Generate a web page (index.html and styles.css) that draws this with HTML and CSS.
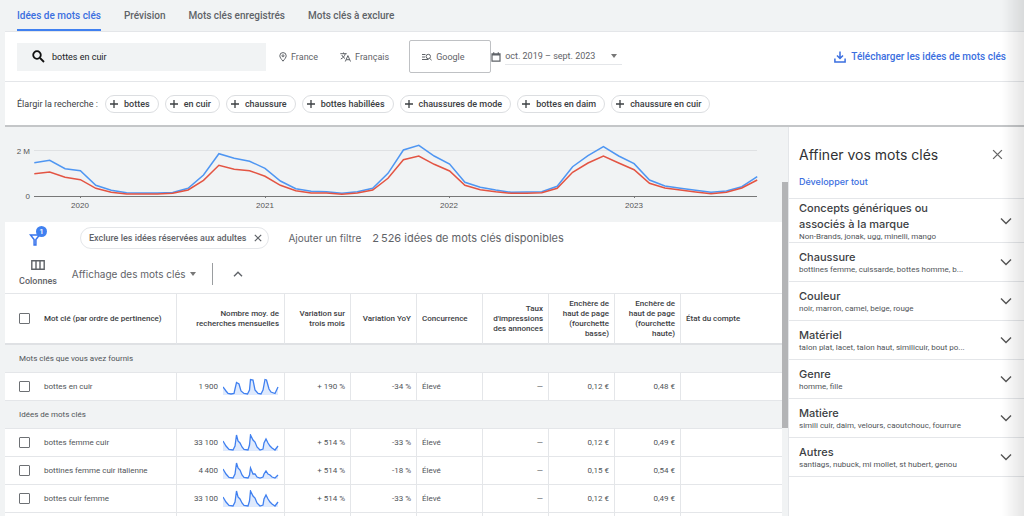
FILE: index.html
```html
<!DOCTYPE html>
<html lang="fr">
<head>
<meta charset="utf-8">
<meta name="viewport" content="width=device-width, initial-scale=1">
<title>Idées de mots clés</title>
<link rel="stylesheet" href="styles.css">
</head>
<body>
<svg class="defs" aria-hidden="true">
  <symbol id="plus" viewBox="0 0 10 10"><path d="M5 1v8M1 5h8"/></symbol>
  <symbol id="cross" viewBox="0 0 10 10"><path d="M1 1l8 8M9 1L1 9"/></symbol>
  <symbol id="down" viewBox="0 0 12 8"><path d="M1 1.500l5 5 5-5"/></symbol>
  <symbol id="spark-a" viewBox="0 0 56 18"><path class="area" d="M0 9L3 13 5 15.500 8 16 11 15.500 12 11 13.500 4.500 16 6 18 13 21 15.500 24.500 16 26.500 12 27.500 1.500 30 2 32 12 35 15.500 38 16 40 12 42 1.500 43.500 2 46 11 48 14 52 15.500 55 9V17H0z"/><path d="M0 9L3 13 5 15.500 8 16 11 15.500 12 11 13.500 4.500 16 6 18 13 21 15.500 24.500 16 26.500 12 27.500 1.500 30 2 32 12 35 15.500 38 16 40 12 42 1.500 43.500 2 46 11 48 14 52 15.500 55 9"/></symbol>
  <symbol id="spark-b" viewBox="0 0 56 18"><path class="area" d="M0 7L3 12 6 15.500 10 16 12 12 13.500 1 15 7 17 9 19 13 21 15.500 25 16 26.500 11 27.500 1 30 6 32 8 34 13 37 16 40 15 41 9 43 5 45 9 47 12 49 14 52 16 55 12V17H0z"/><path d="M0 7L3 12 6 15.500 10 16 12 12 13.500 1 15 7 17 9 19 13 21 15.500 25 16 26.500 11 27.500 1 30 6 32 8 34 13 37 16 40 15 41 9 43 5 45 9 47 12 49 14 52 16 55 12"/></symbol>
  <symbol id="spark-c" viewBox="0 0 56 18"><path class="area" d="M0 7L3 12 6 15.500 10 16 12 12 13.500 1 15 6 17 8 19 13 21 15.500 25 16 26.500 13 27.500 6 30 12 32 12 34 15 37 16 40 15 41 12 43 9 45 12 47 13 49 15 52 16 55 13V17H0z"/><path d="M0 7L3 12 6 15.500 10 16 12 12 13.500 1 15 6 17 8 19 13 21 15.500 25 16 26.500 13 27.500 6 30 12 32 12 34 15 37 16 40 15 41 12 43 9 45 12 47 13 49 15 52 16 55 13"/></symbol>
</svg>

<nav class="tabs">
  <a class="tab active" href="#idees">Idées de mots clés</a>
  <a class="tab" href="#prevision">Prévision</a>
  <a class="tab" href="#enregistres">Mots clés enregistrés</a>
  <a class="tab" href="#exclure">Mots clés à exclure</a>
</nav>

<header class="top">
  <div class="search-row">
    <label class="search">
      <svg class="icon-search" viewBox="0 0 13 13"><circle cx="5" cy="5" r="3.800"/><path d="M8 8l4 4"/></svg>
      <input type="text" value="bottes en cuir" aria-label="Mots clés">
    </label>
    <button class="setting place"><svg class="icon-pin" viewBox="0 0 8 10"><path d="M4 9.200C2.200 7 .8 5.300.8 3.800a3.200 3.200 0 0 1 6.400 0C7.200 5.300 5.800 7 4 9.200z"/><circle cx="4" cy="3.800" r="1"/></svg>France</button>
    <button class="setting language"><svg class="icon-lang" viewBox="0 0 11 10"><path d="M.3 1.700h6.400M3.500.5v1.200M5.300 1.700C4.800 4 3 5.900.8 7M1.800 3C2.400 4.600 3.700 5.800 5 6.500M5.300 9.500L7.900 3.600l2.600 5.900M6.200 7.700h3.400"/></svg>Français</button>
    <button class="setting network"><svg class="icon-net" viewBox="0 0 10 8"><path d="M0 1.500h3.500M0 4h3M0 6.500h6.500M7.600 5.400L9.600 7.200"/><circle cx="6.300" cy="3.500" r="2.200"/></svg>Google</button>
    <button class="setting dates"><svg class="icon-cal" viewBox="0 0 10 10"><path d="M1 1.800h8v7.400H1zM1 2.900h8M2.700.3v1.500M7.300.3v1.500"/></svg><span class="range">oct. 2019 – sept. 2023<i class="caret"></i></span></button>
    <button class="download"><svg class="icon-dl" viewBox="0 0 12 12"><path d="M6 .5v6.800M3 4.500l3 3 3-3M.9 7.500v3.400h10.200V7.500"/></svg>Télécharger les idées de mots clés</button>
  </div>
  <div class="broaden">
    <span class="broaden-label">Élargir la recherche :</span>
    <button class="chip"><svg class="icon-plus"><use href="#plus"/></svg>bottes</button>
    <button class="chip"><svg class="icon-plus"><use href="#plus"/></svg>en cuir</button>
    <button class="chip"><svg class="icon-plus"><use href="#plus"/></svg>chaussure</button>
    <button class="chip"><svg class="icon-plus"><use href="#plus"/></svg>bottes habillées</button>
    <button class="chip"><svg class="icon-plus"><use href="#plus"/></svg>chaussures de mode</button>
    <button class="chip"><svg class="icon-plus"><use href="#plus"/></svg>bottes en daim</button>
    <button class="chip"><svg class="icon-plus"><use href="#plus"/></svg>chaussure en cuir</button>
  </div>
</header>

<div class="workspace">
  <main class="content">
    <svg class="chart" viewBox="5 127 777 95" role="img" aria-label="Volume de recherche par mois">
      <path class="grid-line" d="M34 150.500H757"/>
      <path class="axis" d="M34 196.500H757M80.500 196v2M265.500 196v2M449.500 196v2M634.500 196v2"/>
      <polyline class="line blue" points="34.300,162.700 49.700,160.300 65.100,168.700 80.400,170.700 95.800,185.300 111.200,190.300 126.600,192.700 142,193 157.300,193 172.700,192.500 188.100,188.300 203.500,175 218.900,153.700 234.200,158.300 249.600,161.300 265,168.300 280.400,181 295.800,188.700 311.100,191.300 326.500,191.700 341.900,193.300 357.300,191.700 372.700,188.300 388,173.300 403.400,150 418.800,145.300 434.200,156 449.600,164 464.900,182.300 480.300,187.300 495.700,190 511.100,192.300 526.500,192 541.800,191.700 557.200,186.300 572.600,166.700 588,155.700 603.400,146.700 618.700,156 634.100,163.700 649.500,180 664.900,186 680.300,188.300 695.600,190.300 711,192.300 726.400,191 741.800,186.700 757.200,176.700"/>
      <polyline class="line red" points="34.300,173.700 49.700,172 65.100,177.300 80.400,179.700 95.800,188.300 111.200,192.300 126.600,194 142,194 157.300,194 172.700,193.300 188.100,190 203.500,180.300 218.900,165.300 234.200,169.300 249.600,170.700 265,176.300 280.400,185.300 295.800,190.700 311.100,193 326.500,193 341.900,194.300 357.300,193 372.700,190 388,178.300 403.400,159.700 418.800,156 434.200,164.300 449.600,171 464.900,185.300 480.300,189.700 495.700,191.700 511.100,193.300 526.500,193.200 541.800,192.700 557.200,188.300 572.600,172.300 588,163 603.400,156 618.700,163 634.100,169.700 649.500,183.300 664.900,188 680.300,190 695.600,192 711,193.700 726.400,192.300 741.800,188 757.200,180"/>
      <text x="30" y="154" text-anchor="end">2 M</text>
      <text x="30" y="199" text-anchor="end">0</text>
      <text x="80" y="208" text-anchor="middle">2020</text>
      <text x="265" y="208" text-anchor="middle">2021</text>
      <text x="449" y="208" text-anchor="middle">2022</text>
      <text x="634" y="208" text-anchor="middle">2023</text>
    </svg>

    <section class="panel">
      <div class="filters">
        <button class="filter-button" aria-label="Filtres"><svg class="icon-filter" viewBox="0 0 11 12"><path d="M1 1h9L6.400 5.500V11H4.600V5.500z"/></svg><span class="badge">1</span></button>
        <button class="filter-chip">Exclure les idées réservées aux adultes<svg class="icon-cross"><use href="#cross"/></svg></button>
        <button class="add-filter">Ajouter un filtre</button>
        <span class="count">2&#8201;526 idées de mots clés disponibles</span>
      </div>
      <div class="tools">
        <button class="columns"><svg class="icon-columns" viewBox="0 0 14 10"><path d="M.8.800h12.400v8.400H.8zM5 1v8M9 1v8"/></svg>Colonnes</button>
        <button class="view">Affichage des mots clés<i class="caret"></i></button>
        <button class="collapse" aria-label="Réduire"><svg class="icon-up" viewBox="0 0 10 6"><path d="M1 5.200l4-4 4 4"/></svg></button>
      </div>
      <table class="keywords">
        <colgroup><col class="c-name"><col class="c-volume"><col class="c-std"><col class="c-std"><col class="c-std"><col class="c-std"><col class="c-std"><col class="c-std"><col></colgroup>
        <thead>
          <tr>
            <th class="left"><label class="name"><input type="checkbox">Mot clé (par ordre de pertinence)</label></th>
            <th>Nombre moy. de recherches mensuelles</th>
            <th>Variation sur trois mois</th>
            <th>Variation YoY</th>
            <th class="left">Concurrence</th>
            <th>Taux d'impressions des annonces</th>
            <th>Enchère de haut de page (fourchette basse)</th>
            <th>Enchère de haut de page (fourchette haute)</th>
            <th class="left">État du compte</th>
          </tr>
        </thead>
        <tbody>
          <tr class="group"><td colspan="9">Mots clés que vous avez fournis</td></tr>
          <tr><td class="left"><label class="name"><input type="checkbox">bottes en cuir</label></td><td><span class="volume">1&#8201;900<svg class="spark"><use href="#spark-a"/></svg></span></td><td>+ 190 %</td><td>-34 %</td><td class="left">Élevé</td><td>—</td><td>0,12 €</td><td>0,48 €</td><td></td></tr>
          <tr class="group"><td colspan="9">Idées de mots clés</td></tr>
          <tr><td class="left"><label class="name"><input type="checkbox">bottes femme cuir</label></td><td><span class="volume">33&#8201;100<svg class="spark"><use href="#spark-b"/></svg></span></td><td>+ 514 %</td><td>-33 %</td><td class="left">Élevé</td><td>—</td><td>0,12 €</td><td>0,49 €</td><td></td></tr>
          <tr><td class="left"><label class="name"><input type="checkbox">bottines femme cuir italienne</label></td><td><span class="volume">4&#8201;400<svg class="spark"><use href="#spark-c"/></svg></span></td><td>+ 514 %</td><td>-18 %</td><td class="left">Élevé</td><td>—</td><td>0,15 €</td><td>0,54 €</td><td></td></tr>
          <tr><td class="left"><label class="name"><input type="checkbox">bottes cuir femme</label></td><td><span class="volume">33&#8201;100<svg class="spark"><use href="#spark-b"/></svg></span></td><td>+ 514 %</td><td>-33 %</td><td class="left">Élevé</td><td>—</td><td>0,12 €</td><td>0,49 €</td><td></td></tr>
          <tr><td></td><td></td><td></td><td></td><td></td><td></td><td></td><td></td><td></td></tr>
        </tbody>
      </table>
    </section>
  </main>
  <div class="scroll-track"><div class="scroll-thumb"></div></div>
  <aside class="refine">
    <div class="refine-head"><h2>Affiner vos mots clés</h2><button class="close" aria-label="Fermer"><svg class="icon-close"><use href="#cross"/></svg></button></div>
    <button class="expand">Développer tout</button>
    <button class="facet first"><span class="facet-text"><span class="facet-name">Concepts génériques ou associés à la marque</span><span class="facet-values">Non-Brands, jonak, ugg, minelli, mango</span></span><svg class="icon-down"><use href="#down"/></svg></button>
    <button class="facet"><span class="facet-text"><span class="facet-name">Chaussure</span><span class="facet-values">bottines femme, cuissarde, bottes homme, b...</span></span><svg class="icon-down"><use href="#down"/></svg></button>
    <button class="facet"><span class="facet-text"><span class="facet-name">Couleur</span><span class="facet-values">noir, marron, camel, beige, rouge</span></span><svg class="icon-down"><use href="#down"/></svg></button>
    <button class="facet"><span class="facet-text"><span class="facet-name">Matériel</span><span class="facet-values">talon plat, lacet, talon haut, similicuir, bout po...</span></span><svg class="icon-down"><use href="#down"/></svg></button>
    <button class="facet"><span class="facet-text"><span class="facet-name">Genre</span><span class="facet-values">homme, fille</span></span><svg class="icon-down"><use href="#down"/></svg></button>
    <button class="facet"><span class="facet-text"><span class="facet-name">Matière</span><span class="facet-values">simili cuir, daim, velours, caoutchouc, fourrure</span></span><svg class="icon-down"><use href="#down"/></svg></button>
    <button class="facet"><span class="facet-text"><span class="facet-name">Autres</span><span class="facet-values">santiags, nubuck, mi mollet, st hubert, genou</span></span><svg class="icon-down"><use href="#down"/></svg></button>
  </aside>
</div>
<div class="edge-shade"></div>
</body>
</html>
```

FILE: styles.css
```css
* { box-sizing: border-box; }

:root {
  --grey: #f1f3f4;
  --line: #e4e6e9;
  --text: #3c4043;
  --muted: #5f6368;
  --blue: #3b6fe0;
  --display: Inter, Roboto, sans-serif;
  --label: Roboto, "Liberation Sans", sans-serif;
}

body {
  margin: 0;
  height: 100vh;
  display: flex;
  flex-direction: column;
  overflow: hidden;
  padding-left: 5px;
  background: var(--grey);
  color: var(--text);
  font: 9px/12px var(--label);
}

button {
  border: 0;
  padding: 0;
  background: none;
  color: inherit;
  font: inherit;
  text-align: left;
  cursor: pointer;
}

svg { fill: none; stroke: currentColor; flex: none; }
.defs { position: absolute; width: 0; height: 0; }

.tabs {
  flex: none;
  display: flex;
  gap: 23px;
  height: 32px;
  padding-left: 12px;
  border-bottom: 1px solid var(--line);
}
.tab {
  display: flex;
  align-items: center;
  color: var(--muted);
  font: 500 10px/12px var(--label);
  text-decoration: none;
}
.tab.active {
  color: var(--blue);
  border-bottom: 2px solid #4080f0;
  padding-top: 2px;
}

.top {
  flex: none;
  background: #fff;
  border-bottom: 2px solid #c4c6c8;
}
.search-row {
  display: flex;
  align-items: center;
  height: 50px;
  padding: 0 18px 0 12px;
  border-bottom: 1px solid var(--line);
}
.search {
  display: flex;
  align-items: center;
  gap: 7px;
  width: 249px;
  height: 28px;
  padding-left: 15px;
  background: var(--grey);
}
.search input {
  flex: 1;
  min-width: 0;
  border: 0;
  outline: 0;
  padding: 0;
  background: none;
  color: #202124;
  font: 9px/12px var(--label);
}
.icon-search { width: 13px; height: 13px; stroke: #111; stroke-width: 1.8; }
.setting { display: flex; align-items: center; gap: 4px; color: var(--muted); }
.place { margin-left: 13px; }
.language { margin-left: 22px; }
.icon-pin { width: 8px; height: 10px; }
.icon-lang { width: 11px; height: 10px; }
.icon-net { width: 10px; height: 8px; }
.icon-cal { width: 10px; height: 10px; stroke-width: 1.2; }
.network {
  margin-left: 20px;
  width: 82px;
  height: 33px;
  padding-left: 12px;
  border: 1px solid #bfc1c4;
  border-radius: 2px;
}
.range {
  display: flex;
  align-items: center;
  justify-content: space-between;
  width: 117px;
  height: 17px;
  padding-right: 5px;
  border-bottom: 1px solid var(--line);
}
.caret {
  border: 3px solid transparent;
  border-top: 4px solid #777;
  border-bottom: 0;
}
.download {
  display: flex;
  align-items: center;
  gap: 5px;
  margin-left: auto;
  color: var(--blue);
  font: 500 10px/12px var(--label);
}
.icon-dl { width: 12px; height: 12px; stroke-width: 1.5; }

.broaden {
  display: flex;
  align-items: center;
  gap: 6px;
  height: 43px;
  padding-left: 12px;
}
.broaden-label { margin-right: 1px; }
.chip {
  display: flex;
  align-items: center;
  gap: 5px;
  height: 18px;
  padding: 0 8px 0 3px;
  border: 1px solid #dcdee1;
  border-radius: 9px;
  font-weight: 500;
}
.icon-plus { width: 10px; height: 10px; stroke-width: 1.3; }

.workspace { flex: 1; min-height: 0; display: flex; }
.content { flex: 1; min-width: 0; overflow: hidden; }
.chart { display: block; width: 100%; }
.chart text { fill: #555; stroke: none; font: 8px "Liberation Sans", sans-serif; }
.grid-line { stroke: #dfe1e3; }
.axis { stroke: #777; }
.line { stroke-width: 1.5; }
.line.blue { stroke: #4f96f2; }
.line.red { stroke: #e35443; }

.panel { background: #fff; }
.filters { display: flex; align-items: center; height: 32px; padding-left: 24px; color: var(--muted); }
.filter-button { position: relative; width: 18px; height: 18px; margin-right: 33px; }
.icon-filter { width: 12px; height: 12px; margin-top: 5px; stroke: #3974ec; stroke-width: 1.5; }
.badge {
  position: absolute;
  top: -3px;
  right: 0;
  width: 11px;
  height: 11px;
  border-radius: 50%;
  background: #4080f0;
  color: #fff;
  font: 500 8px/11px var(--label);
  text-align: center;
}
.filter-chip {
  display: flex;
  align-items: center;
  gap: 8px;
  height: 22px;
  padding: 0 6px 0 8px;
  border: 1px solid var(--line);
  border-radius: 11px;
  font: 500 9px/12px var(--label);
}
.icon-cross { width: 8px; height: 8px; stroke-width: 1.5; }
.add-filter { margin-left: 19px; font: 10px/12px var(--display); }
.count { margin-left: 11px; font: 11px/12px var(--display); }

.tools { display: flex; align-items: center; height: 39px; padding-left: 14px; color: var(--muted); }
.columns { display: flex; flex-direction: column; align-items: center; gap: 5px; font-weight: 500; }
.icon-columns { width: 14px; height: 10px; stroke-width: 1.4; }
.view { display: flex; align-items: center; gap: 4px; margin-left: 15px; font: 10px/12px var(--display); }
.collapse { display: flex; align-items: center; height: 22px; margin-left: 16px; padding-left: 20px; border-left: 1px solid #9a9da0; }
.icon-up { width: 10px; height: 6px; stroke-width: 1.4; }

.keywords { width: 100%; border-collapse: separate; border-spacing: 0; table-layout: fixed; border-top: 1px solid var(--line); }
.c-name { width: 172px; }
.c-volume { width: 108px; }
.c-std { width: 66px; }
.keywords th { height: 51px; padding: 0 5px; border-bottom: 2px solid #dfe1e4; font: 500 8px/10px var(--label); }
.keywords td { height: 28px; padding: 0 5px; border-bottom: 1px solid var(--line); color: #505458; font-size: 8px; }
.keywords th, .keywords td { text-align: right; vertical-align: middle; border-right: 1px solid var(--line); }
.keywords th:last-child, .keywords td:last-child { border-right: 0; }
.keywords .left { text-align: left; }
.keywords .group td { background: var(--grey); text-align: left; padding-left: 14px; }
.name { display: flex; align-items: center; gap: 14px; padding-left: 9px; white-space: nowrap; }
.name input { appearance: none; flex: none; width: 11px; height: 11px; margin: 0; border: 1px solid #6d7074; border-radius: 1px; background: #fff; }
.volume { display: flex; align-items: center; justify-content: flex-end; gap: 5px; }
.spark { width: 56px; height: 18px; stroke: #4080f0; stroke-width: 1.3; }
.area { fill: #dfeafd; stroke: none; }

.scroll-track { flex: none; width: 6px; background: var(--grey); }
.scroll-thumb { height: 246px; margin-top: 55px; background: #b3b4b6; }

.refine { flex: none; width: 236px; background: #fff; border-left: 1px solid var(--line); }
.refine-head { display: flex; align-items: center; justify-content: space-between; height: 47px; padding: 8px 21px 0 10px; }
.refine-head h2 { margin: 0; color: #303134; font: 14px/20px var(--display); }
.close { display: flex; }
.icon-close { width: 11px; height: 11px; color: #666; stroke-width: 1.2; }
.expand { display: block; height: 24px; padding: 0 10px 8px; color: var(--blue); font: 500 9px/12px var(--display); }
.facet {
  display: flex;
  align-items: center;
  justify-content: space-between;
  width: 100%;
  height: 39px;
  padding: 0 12px 0 10px;
  border-top: 1px solid var(--line);
}
.facet:last-child { height: 40px; border-bottom: 1px solid var(--line); }
.facet.first { height: 44px; }
.facet-text { display: flex; flex-direction: column; width: 172px; white-space: nowrap; }
.facet-name { font: 500 11px/16px var(--display); white-space: normal; }
.facet-values { font-size: 8px; line-height: 10px; color: #505458; }
.icon-down { width: 12px; height: 8px; stroke-width: 1.4; color: #555; }

.edge-shade {
  position: fixed;
  inset: 0 0 0 auto;
  width: 22px;
  background: linear-gradient(to right, transparent, rgba(0, 0, 0, .1));
  pointer-events: none;
}
```
